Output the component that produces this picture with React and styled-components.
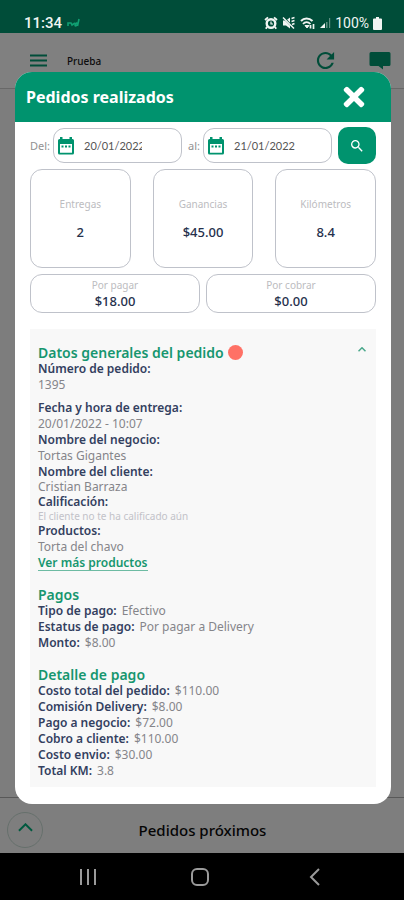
import React, { useState } from 'react';
import styled, { createGlobalStyle } from 'styled-components';
import { MdSearch } from 'react-icons/md';
import { IoMdRefresh } from 'react-icons/io';
import { FaTimes } from 'react-icons/fa';

const GlobalStyle = createGlobalStyle`
  * {
    box-sizing: border-box;
  }

  body {
    margin: 0;
    background: #000;
    font-family: "Noto Sans", "Open Sans", sans-serif;
  }

  h1, h2, h3, p, dl, dt, dd {
    margin: 0;
  }

  button {
    border: 0;
    padding: 0;
    background: none;
    font-family: inherit;
    cursor: pointer;
  }
`;

const Phone = styled.div`
  position: relative;
  display: flex;
  flex-direction: column;
  min-height: 100vh;
`;

const StatusBar = styled.div`
  display: flex;
  align-items: center;
  justify-content: space-between;
  height: 33px;
  padding: 13px 22px 0 24px;
  background: #004d39;
  color: #f1f5f3;
  font-family: Roboto, sans-serif;
`;

const StatusGroup = styled.div`
  display: flex;
  align-items: center;
  gap: ${({ $gap }) => $gap}px;
`;

const Clock = styled.span`
  font-size: 15px;
  font-weight: 500;
  line-height: 18px;
`;

const Battery = styled.span`
  font-size: 14px;
  line-height: 18px;
`;

const AppBar = styled.header`
  display: flex;
  align-items: center;
  height: 56px;
  padding: 0 13px 0 30px;
  background: #808080;
  border-bottom: 1px solid #686868;
  color: #004d39;
`;

const AppTitle = styled.span`
  flex: 1;
  margin-left: 20px;
  font-size: 10px;
  font-weight: 500;
  color: #0c0c0c;
`;

const BarButton = styled.button`
  display: flex;
  color: inherit;
  margin-left: ${({ $space }) => $space || 0}px;
`;

const Backdrop = styled.main`
  flex: 1;
  background: #7d7d7d;
`;

const BottomSheet = styled.footer`
  display: grid;
  grid-template-columns: 36px 1fr 36px;
  align-items: center;
  height: 56px;
  padding: 8px 6px 0 7px;
  background: #7e7e7e;
  border-top: 1px solid #585858;
`;

const RoundButton = styled.button`
  display: flex;
  align-items: center;
  justify-content: center;
  width: 36px;
  height: 36px;
  padding-bottom: 5px;
  border: 1px solid #66706c;
  border-radius: 50%;
  color: #00593f;
`;

const SheetTitle = styled.h2`
  text-align: center;
  font-size: 15px;
  font-weight: 500;
  color: #050505;
`;

const NavBar = styled.nav`
  display: flex;
  align-items: center;
  justify-content: space-between;
  height: 47px;
  padding: 0 78px;
  background: #000;
  color: #9a9a9a;
`;

const NavButton = styled.button`
  display: flex;
  color: inherit;
`;

/* Dialog over the app */
const Overlay = styled.div`
  position: absolute;
  inset: 0;
  padding: 72px 13px 0 15px;
`;

const Dialog = styled.section`
  overflow: hidden;
  background: #fff;
  border-radius: 17px;
`;

const DialogHeader = styled.div`
  display: flex;
  align-items: center;
  justify-content: space-between;
  height: 50px;
  padding: 0 22px 0 11px;
  background: #00936e;
  color: #fff;
`;

const DialogTitle = styled.h1`
  font-size: 16px;
  font-weight: 700;
`;

const DialogBody = styled.div`
  padding: 5px 15px 17px;
`;

const Filters = styled.form`
  display: flex;
  align-items: center;
`;

const FilterLabel = styled.label`
  flex: none;
  width: ${({ $width }) => $width}px;
  padding-left: ${({ $indent }) => $indent || 0}px;
  font-size: 11px;
  color: #929292;
`;

const DateField = styled.div`
  display: flex;
  flex: 1;
  align-items: center;
  gap: 9px;
  min-width: 0;
  height: 35px;
  padding: 0 5px 0 3px;
  border: 1px solid #bfc2ca;
  border-radius: 11px;
  color: #00936e;

  svg {
    flex: none;
  }
`;

const DateInput = styled.input`
  width: ${({ $width }) => $width}px;
  min-width: 0;
  padding: 0;
  border: 0;
  outline: 0;
  background: transparent;
  font-family: Lato, sans-serif;
  font-size: 11px;
  color: #555;
`;

const SearchButton = styled.button`
  display: flex;
  align-items: center;
  justify-content: center;
  width: 38px;
  height: 37px;
  margin-left: 6px;
  border-radius: 10px;
  background: #00936e;
  color: #fff;
`;

const Stats = styled.dl`
  display: grid;
  grid-template-columns: repeat(3, 1fr);
  gap: 22px;
  margin-top: 5px;
`;

const Totals = styled.dl`
  display: grid;
  grid-template-columns: repeat(2, 1fr);
  gap: 6px;
  margin-top: 6px;
`;

const Card = styled.div`
  display: flex;
  flex-direction: column;
  align-items: center;
  justify-content: center;
  gap: ${({ $gap }) => $gap || 0}px;
  height: ${({ $height }) => $height}px;
  border: 1px solid #bfc2ca;
  border-radius: 12px;
`;

const CardLabel = styled.dt`
  font-size: 10px;
  line-height: 14px;
  color: #bcbcc0;
`;

const CardValue = styled.dd`
  font-size: 13px;
  font-weight: 500;
  line-height: 18px;
  color: #25304c;
`;

const Panel = styled.article`
  margin-top: 16px;
  padding: 15px 8px 8px;
  background: #f8f8f8;
`;

const PanelHead = styled.div`
  display: flex;
  align-items: center;
`;

const Heading = styled.h3`
  font-size: 14px;
  font-weight: 600;
  line-height: 17px;
  color: #16966f;
`;

const Dot = styled.span`
  width: 15px;
  height: 15px;
  margin-left: 4px;
  border-radius: 50%;
  background: #ff7166;
`;

const Toggle = styled.button`
  display: flex;
  margin-left: auto;
  padding: 0 2px 6px 0;
  color: #4aa88b;
`;

const Section = styled.div`
  margin-top: 15px;
`;

const Item = styled.div`
  margin-top: ${({ $space }) => $space || 0}px;
  line-height: ${({ $line }) => $line || 16}px;
`;

const Row = styled.div`
  display: flex;
  gap: 5px;
  line-height: 16px;
`;

const Term = styled.dt`
  font-size: 12px;
  font-weight: 600;
  color: #33405f;
`;

const Value = styled.dd`
  font-size: 12px;
  color: #85858a;
`;

const Note = styled.dd`
  font-size: 10px;
  line-height: 14px;
  color: #c2c2c8;
`;

const MoreLink = styled.a`
  display: block;
  width: fit-content;
  border-bottom: 1px solid #6dbba3;
  font-size: 12px;
  font-weight: 600;
  line-height: 15px;
  color: #16966f;
  text-decoration: none;
`;

const Chevron = ({ width, height, stroke }) => (
  <svg width={width} height={height} viewBox="0 0 16 9" fill="none">
    <path d="M1 8 L8 1 L15 8" stroke="currentColor" strokeWidth={stroke} />
  </svg>
);

const CalendarIcon = () => (
  <svg width="18" height="20" viewBox="0 0 18 20">
    <path
      d="M3 1 H5.500 V3 H12.500 V1 H15 V3 H15.500 Q17 3 17 4.500 V17 Q17 18.500 15.500 18.500 H2.500 Q1 18.500 1 17 V4.500 Q1 3 2.500 3 H3 Z M3 8 V16.800 H15 V8 Z"
      fill="currentColor"
      fillRule="evenodd"
    />
    <path d="M4.500 9.500 H6.500 V11.500 H4.500 Z M8 9.500 H10 V11.500 H8 Z M11.500 9.500 H13.500 V11.500 H11.500 Z" fill="currentColor" />
  </svg>
);

const AlarmIcon = () => (
  <svg width="14" height="14" viewBox="0 0 14 14" fill="none" stroke="currentColor">
    <circle cx="7" cy="7.500" r="4.300" strokeWidth="2.400" />
    <path d="M1 4 L4 1.300 M13 4 L10 1.300 M3 11 L1.800 12.800 M11 11 L12.200 12.800" strokeWidth="1.800" />
    <path d="M7 5.500 V8 H9" strokeWidth="1.200" />
  </svg>
);

const MuteIcon = () => (
  <svg width="14" height="14" viewBox="0 0 14 14" fill="currentColor">
    <path d="M1 4.500 H4 L8 1.500 V12.500 L4 9.500 H1 Z" />
    <path d="M1 1 L12.500 12.800" stroke="#004d39" strokeWidth="2" />
    <path d="M1 1.500 L12 12.500 M9.500 2.500 L12.500 1.500 M9.500 5.500 L12.500 4.500 M10 8.500 L12.500 7.500" stroke="currentColor" strokeWidth="1.500" />
  </svg>
);

const stats = [
  { label: 'Entregas', value: '2' },
  { label: 'Ganancias', value: '$45.00' },
  { label: 'Kilómetros', value: '8.4' },
];

const totals = [
  { label: 'Por pagar', value: '$18.00' },
  { label: 'Por cobrar', value: '$0.00' },
];

const payment = [
  ['Tipo de pago:', 'Efectivo'],
  ['Estatus de pago:', 'Por pagar a Delivery'],
  ['Monto:', '$8.00'],
];

const breakdown = [
  ['Costo total del pedido:', '$110.00'],
  ['Comisión Delivery:', '$8.00'],
  ['Pago a negocio:', '$72.00'],
  ['Cobro a cliente:', '$110.00'],
  ['Costo envio:', '$30.00'],
  ['Total KM:', '3.8'],
];

const App = () => {
  const [from, setFrom] = useState('20/01/2022');
  const [to, setTo] = useState('21/01/2022');

  return (
    <Phone>
      <GlobalStyle />

      <StatusBar>
        <StatusGroup $gap={5}>
          <Clock>11:34</Clock>
          <svg width="13" height="10" viewBox="0 0 13 10" fill="none" stroke="#10a073" strokeWidth="1.6">
            <path d="M1 8 V5 H4 L5 7 L8 5 M8 7 C9 4 11 5 10 7 Q8 9 8 7 M10.500 8 L12 1" />
          </svg>
        </StatusGroup>
        <StatusGroup $gap={4}>
          <AlarmIcon />
          <MuteIcon />
          <svg width="15" height="13" viewBox="0 0 15 13" fill="none" stroke="currentColor">
            <path d="M1 4 C4 0.500 9 0.500 12.500 4" strokeWidth="2" />
            <path d="M3 7 C5 4.500 8 4.500 10.500 7" strokeWidth="1.700" />
            <path d="M5 8.500 L7 11 L9 8.500 Z" fill="currentColor" />
            <path d="M10.500 11.500 V8 M13.500 7 V12" strokeWidth="1.700" />
          </svg>
          <svg width="12" height="12" viewBox="0 0 12 12" fill="currentColor">
            <path d="M1 11 L6 6 V11 Z" />
            <path d="M7 5 H8.500 V11 H7 Z M10 1 H11.200 V11 H10 Z" opacity="0.4" />
          </svg>
          <Battery>100%</Battery>
          <svg width="9" height="13" viewBox="0 0 9 13" fill="currentColor">
            <path d="M3 0 H6 V1.500 H8 Q9 1.500 9 2.500 V12 Q9 13 8 13 H1 Q0 13 0 12 V2.500 Q0 1.500 1 1.500 H3 Z" />
          </svg>
        </StatusGroup>
      </StatusBar>

      <AppBar>
        <BarButton aria-label="Menú">
          <svg width="17" height="13" viewBox="0 0 17 13" fill="none" stroke="currentColor" strokeWidth="2">
            <path d="M0 1.500 H17 M0 6.500 H17 M0 11.500 H17" />
          </svg>
        </BarButton>
        <AppTitle>Prueba</AppTitle>
        <BarButton aria-label="Actualizar">
          <IoMdRefresh size={25} />
        </BarButton>
        <BarButton aria-label="Mensajes" $space={31}>
          <svg width="22" height="18" viewBox="0 0 22 18" fill="currentColor">
            <path d="M2 0 H20 Q21.500 0 21.500 1.500 V12.500 Q21.500 14 20 14 H14 V17.500 L9.500 14 H2 Q0.500 14 0.500 12.500 V1.500 Q0.500 0 2 0 Z" />
          </svg>
        </BarButton>
      </AppBar>

      <Backdrop />

      <BottomSheet>
        <RoundButton aria-label="Expandir">
          <Chevron width={15} height={9} stroke={2} />
        </RoundButton>
        <SheetTitle>Pedidos próximos</SheetTitle>
      </BottomSheet>

      <NavBar>
        <NavButton aria-label="Recientes">
          <svg width="20" height="18" viewBox="0 0 20 18" stroke="currentColor" strokeWidth="2">
            <path d="M3 1 V17 M10 1 V17 M17 1 V17" />
          </svg>
        </NavButton>
        <NavButton aria-label="Inicio">
          <svg width="20" height="20" viewBox="0 0 20 20" fill="none" stroke="currentColor" strokeWidth="2">
            <rect x="2" y="2" width="16" height="16" rx="5" />
          </svg>
        </NavButton>
        <NavButton aria-label="Atrás">
          <svg width="24" height="18" viewBox="0 0 24 18" fill="none" stroke="currentColor" strokeWidth="2">
            <path d="M17 1 L9 9 L17 17" />
          </svg>
        </NavButton>
      </NavBar>

      <Overlay>
        <Dialog role="dialog" aria-labelledby="dialog-title">
          <DialogHeader>
            <DialogTitle id="dialog-title">Pedidos realizados</DialogTitle>
            <BarButton aria-label="Cerrar">
              <FaTimes size={30} />
            </BarButton>
          </DialogHeader>

          <DialogBody>
            <Filters onSubmit={(e) => e.preventDefault()}>
              <FilterLabel htmlFor="from" $width={23}>Del:</FilterLabel>
              <DateField>
                <CalendarIcon />
                <DateInput id="from" $width={58} value={from} onChange={(e) => setFrom(e.target.value)} />
              </DateField>
              <FilterLabel htmlFor="to" $width={21} $indent={6}>al:</FilterLabel>
              <DateField>
                <CalendarIcon />
                <DateInput id="to" $width={80} value={to} onChange={(e) => setTo(e.target.value)} />
              </DateField>
              <SearchButton type="submit" aria-label="Buscar">
                <MdSearch size={16} stroke="currentColor" />
              </SearchButton>
            </Filters>

            <Stats>
              {stats.map(({ label, value }) => (
                <Card key={label} $height={99} $gap={12}>
                  <CardLabel>{label}</CardLabel>
                  <CardValue>{value}</CardValue>
                </Card>
              ))}
            </Stats>

            <Totals>
              {totals.map(({ label, value }) => (
                <Card key={label} $height={39}>
                  <CardLabel>{label}</CardLabel>
                  <CardValue>{value}</CardValue>
                </Card>
              ))}
            </Totals>

            <Panel>
              <PanelHead>
                <Heading>Datos generales del pedido</Heading>
                <Dot />
                <Toggle aria-label="Contraer">
                  <Chevron width={8} height={5} stroke={3} />
                </Toggle>
              </PanelHead>
              <dl>
                <Item>
                  <Term>Número de pedido:</Term>
                  <Value>1395</Value>
                </Item>
                <Item $space={7}>
                  <Term>Fecha y hora de entrega:</Term>
                  <Value>20/01/2022 - 10:07</Value>
                </Item>
                <Item>
                  <Term>Nombre del negocio:</Term>
                  <Value>Tortas Gigantes</Value>
                </Item>
                <Item $line={15}>
                  <Term>Nombre del cliente:</Term>
                  <Value>Cristian Barraza</Value>
                </Item>
                <Item $line={15}>
                  <Term>Calificación:</Term>
                  <Note>El cliente no te ha calificado aún</Note>
                </Item>
                <Item>
                  <Term>Productos:</Term>
                  <Value>Torta del chavo</Value>
                </Item>
              </dl>
              <MoreLink href="#productos">Ver más productos</MoreLink>

              <Section>
                <Heading>Pagos</Heading>
                <dl>
                  {payment.map(([term, value]) => (
                    <Row key={term}>
                      <Term>{term}</Term>
                      <Value>{value}</Value>
                    </Row>
                  ))}
                </dl>
              </Section>

              <Section>
                <Heading>Detalle de pago</Heading>
                <dl>
                  {breakdown.map(([term, value]) => (
                    <Row key={term}>
                      <Term>{term}</Term>
                      <Value>{value}</Value>
                    </Row>
                  ))}
                </dl>
              </Section>
            </Panel>
          </DialogBody>
        </Dialog>
      </Overlay>
    </Phone>
  );
};

export default App;
